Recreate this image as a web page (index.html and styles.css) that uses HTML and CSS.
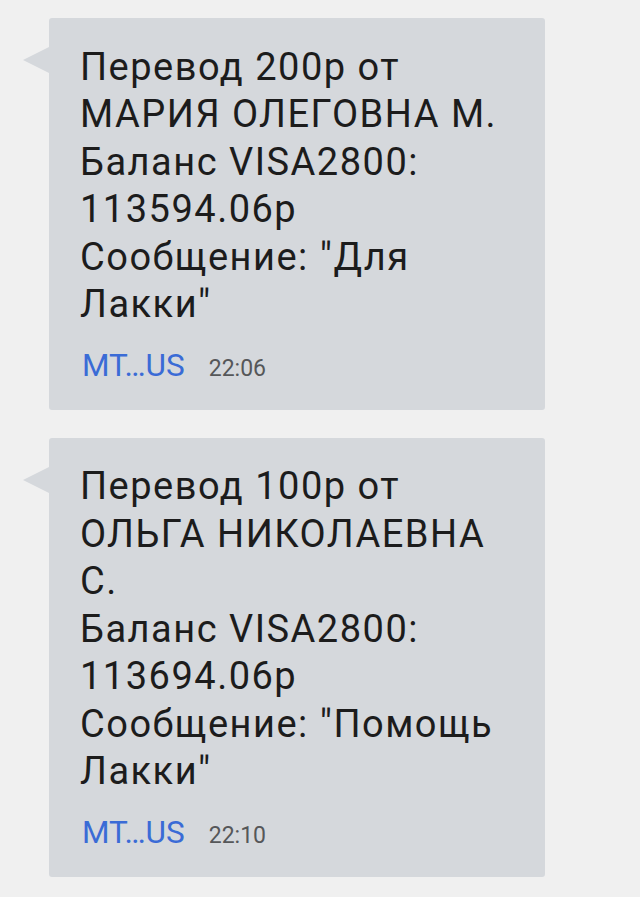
FILE: index.html
```html
<!DOCTYPE html>
<html lang="ru">
<head>
<meta charset="utf-8">
<link rel="stylesheet" href="styles.css">
</head>
<body>
<div class="thread">
  <div class="bubble">
    <div class="text">Перевод 200р от<br>МАРИЯ ОЛЕГОВНА М.<br>Баланс VISA2800:<br>113594.06р<br>Сообщение: "Для<br>Лакки"</div>
    <div class="meta"><span class="sender">MT…US</span><span class="time">22:06</span></div>
  </div>
  <div class="bubble">
    <div class="text">Перевод 100р от<br>ОЛЬГА НИКОЛАЕВНА<br>С.<br>Баланс VISA2800:<br>113694.06р<br>Сообщение: "Помощь<br>Лакки"</div>
    <div class="meta"><span class="sender">MT…US</span><span class="time">22:10</span></div>
  </div>
</div>
</body>
</html>
```
FILE: styles.css
```css
html, body {
  margin: 0;
  padding: 0;
  background: #f0f0f0;
}
body {
  font-family: Roboto, "Noto Sans", sans-serif;
}
.thread {
  display: flex;
  flex-direction: column;
  gap: 28px;
  padding: 18px 0 0 49px;
}
.bubble {
  position: relative;
  width: 496px;
  box-sizing: border-box;
  background: #d5d8dc;
  border-radius: 3px;
  padding: 25.5px 20px 0 31px;
}
.bubble::before {
  content: "";
  position: absolute;
  left: -26px;
  top: 29px;
  width: 0;
  height: 0;
  border-right: 26px solid #d5d8dc;
  border-top: 13px solid transparent;
  border-bottom: 13px solid transparent;
}
.text {
  font-size: 38px;
  line-height: 47.5px;
  letter-spacing: 1.5px;
  color: #1c1c1c;
  white-space: nowrap;
}
.meta {
  display: flex;
  align-items: baseline;
  gap: 24px;
  padding: 19px 0 26px 2px;
}
.sender {
  font-size: 31.5px;
  line-height: 36px;
  color: #3a6bd6;
}
.time {
  font-size: 23px;
  color: #555759;
}
```
